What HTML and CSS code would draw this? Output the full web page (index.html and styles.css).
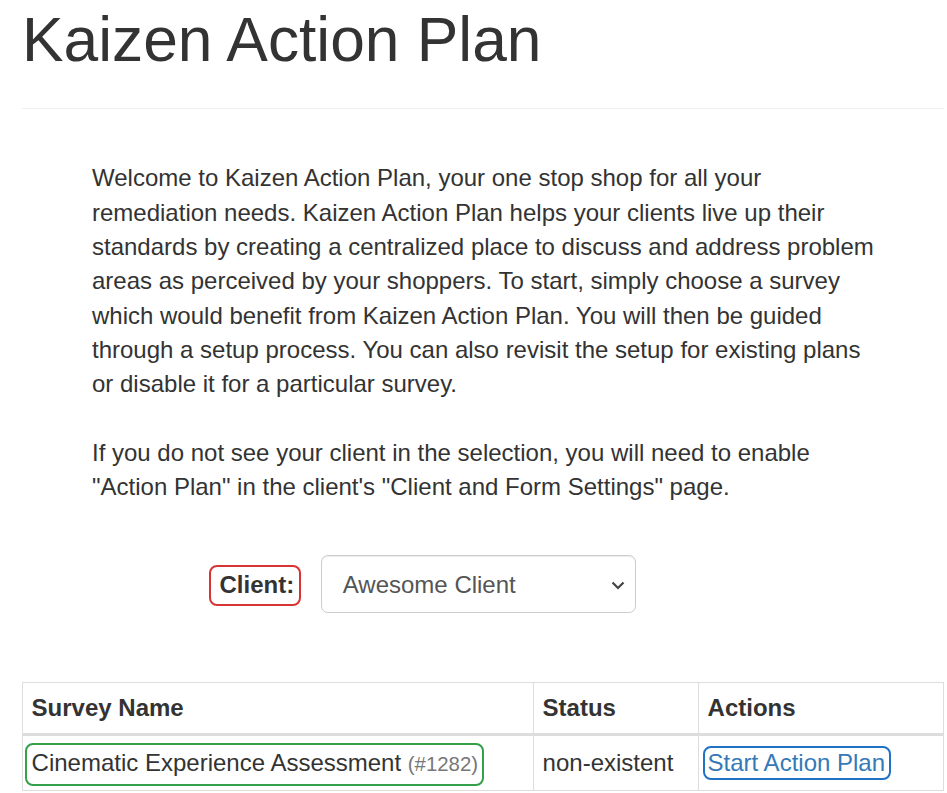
FILE: index.html
```html
<!DOCTYPE html>
<html lang="en">
<head>
<meta charset="utf-8">
<title>Kaizen Action Plan</title>
<link rel="stylesheet" href="styles.css">
</head>
<body>
<div class="container">
  <div class="page-header">
    <h1>Kaizen Action Plan</h1>
  </div>
  <p class="intro">Welcome to Kaizen Action Plan, your one stop shop for all your remediation needs. Kaizen Action Plan helps your clients live up their standards by creating a centralized place to discuss and address problem areas as perceived by your shoppers. To start, simply choose a survey which would benefit from Kaizen Action Plan. You will then be guided through a setup process. You can also revisit the setup for existing plans or disable it for a particular survey.<br><br>If you do not see your client in the selection, you will need to enable "Action Plan" in the client's "Client and Form Settings" page.</p>
  <div class="client-form">
    <label class="client-label">Client:</label>
    <div class="select-control">
      <span class="select-value">Awesome Client</span>
      <svg class="chevron" width="14" height="9" viewBox="0 0 14 9"><path d="M1.5 1.5 L7 7 L12.5 1.5" fill="none" stroke="#444" stroke-width="2.2"/></svg>
    </div>
  </div>
  <table class="surveys">
    <colgroup>
      <col class="c1"><col class="c2"><col class="c3">
    </colgroup>
    <thead>
      <tr><th>Survey Name</th><th>Status</th><th>Actions</th></tr>
    </thead>
    <tbody>
      <tr>
        <td><span class="survey-name">Cinematic Experience Assessment <small class="survey-id">(#1282)</small></span></td>
        <td>non-existent</td>
        <td><a class="start-link" href="#">Start Action Plan</a></td>
      </tr>
    </tbody>
  </table>
</div>
</body>
</html>
```
FILE: styles.css
```css
html, body {
  margin: 0;
  padding: 0;
  background: #fff;
}
body {
  font-family: "Liberation Sans", Arial, Helvetica, sans-serif;
  font-size: 24px;
  line-height: 34.3px;
  color: #333;
}
.container {
  margin-left: 22px;
  width: 922px;
}
.page-header {
  border-bottom: 1px solid #eee;
  padding-bottom: 34.5px;
}
.page-header h1 {
  margin: 6px 0 0 0;
  font-size: 62.3px;
  line-height: 67.9px;
  font-weight: 400;
  color: #333;
}
.intro {
  margin: 52px 0 0 70px;
  width: 788px;
}
.client-form {
  display: flex;
  align-items: center;
  gap: 27px;
  margin-top: 51px;
  padding-left: 197.5px;
}
.client-label {
  position: relative;
  display: inline-block;
  font-weight: 700;
  line-height: 34.3px;
  top: 1px;
}
.client-label::after {
  content: "";
  position: absolute;
  top: -3px;
  bottom: -4px;
  left: -11px;
  right: -7px;
  border: 2px solid #d93434;
  border-radius: 8px;
}
.select-control {
  box-sizing: border-box;
  width: 315px;
  height: 57.6px;
  border: 1px solid #ccc;
  border-radius: 6.9px;
  padding: 2px 10px 0 20.6px;
  display: flex;
  align-items: center;
  justify-content: space-between;
  color: #555;
  box-shadow: inset 0 1px 1px rgba(0,0,0,.075);
}
.surveys {
  margin-top: 69px;
  width: 921px;
  table-layout: fixed;
  border-collapse: collapse;
  border: 1px solid #ddd;
}
.surveys .c1 { width: 511px; }
.surveys .c2 { width: 165px; }
.surveys .c3 { width: 245px; }
.surveys th, .surveys td {
  border: 1px solid #ddd;
  text-align: left;
  vertical-align: top;
  padding: 8.5px 8.6px 7px;
  line-height: 34.3px;
}
.surveys th {
  font-weight: 700;
  border-bottom: 3px solid #ddd;
}
.surveys td {
  padding-top: 10px;
  padding-bottom: 8.5px;
}
.survey-name {
  position: relative;
  display: inline-block;
}
.survey-name::after {
  content: "";
  position: absolute;
  top: -3px;
  bottom: -5px;
  left: -7px;
  right: -6px;
  border: 2px solid #34a04a;
  border-radius: 8px;
}
.survey-id {
  font-size: 85%;
  color: #777;
}
.start-link {
  position: relative;
  display: inline-block;
  color: #337ab7;
  text-decoration: none;
}
.start-link::after {
  content: "";
  position: absolute;
  top: 0;
  bottom: 0;
  left: -5px;
  right: -6px;
  border: 2px solid #1f72c4;
  border-radius: 8px;
}
```
